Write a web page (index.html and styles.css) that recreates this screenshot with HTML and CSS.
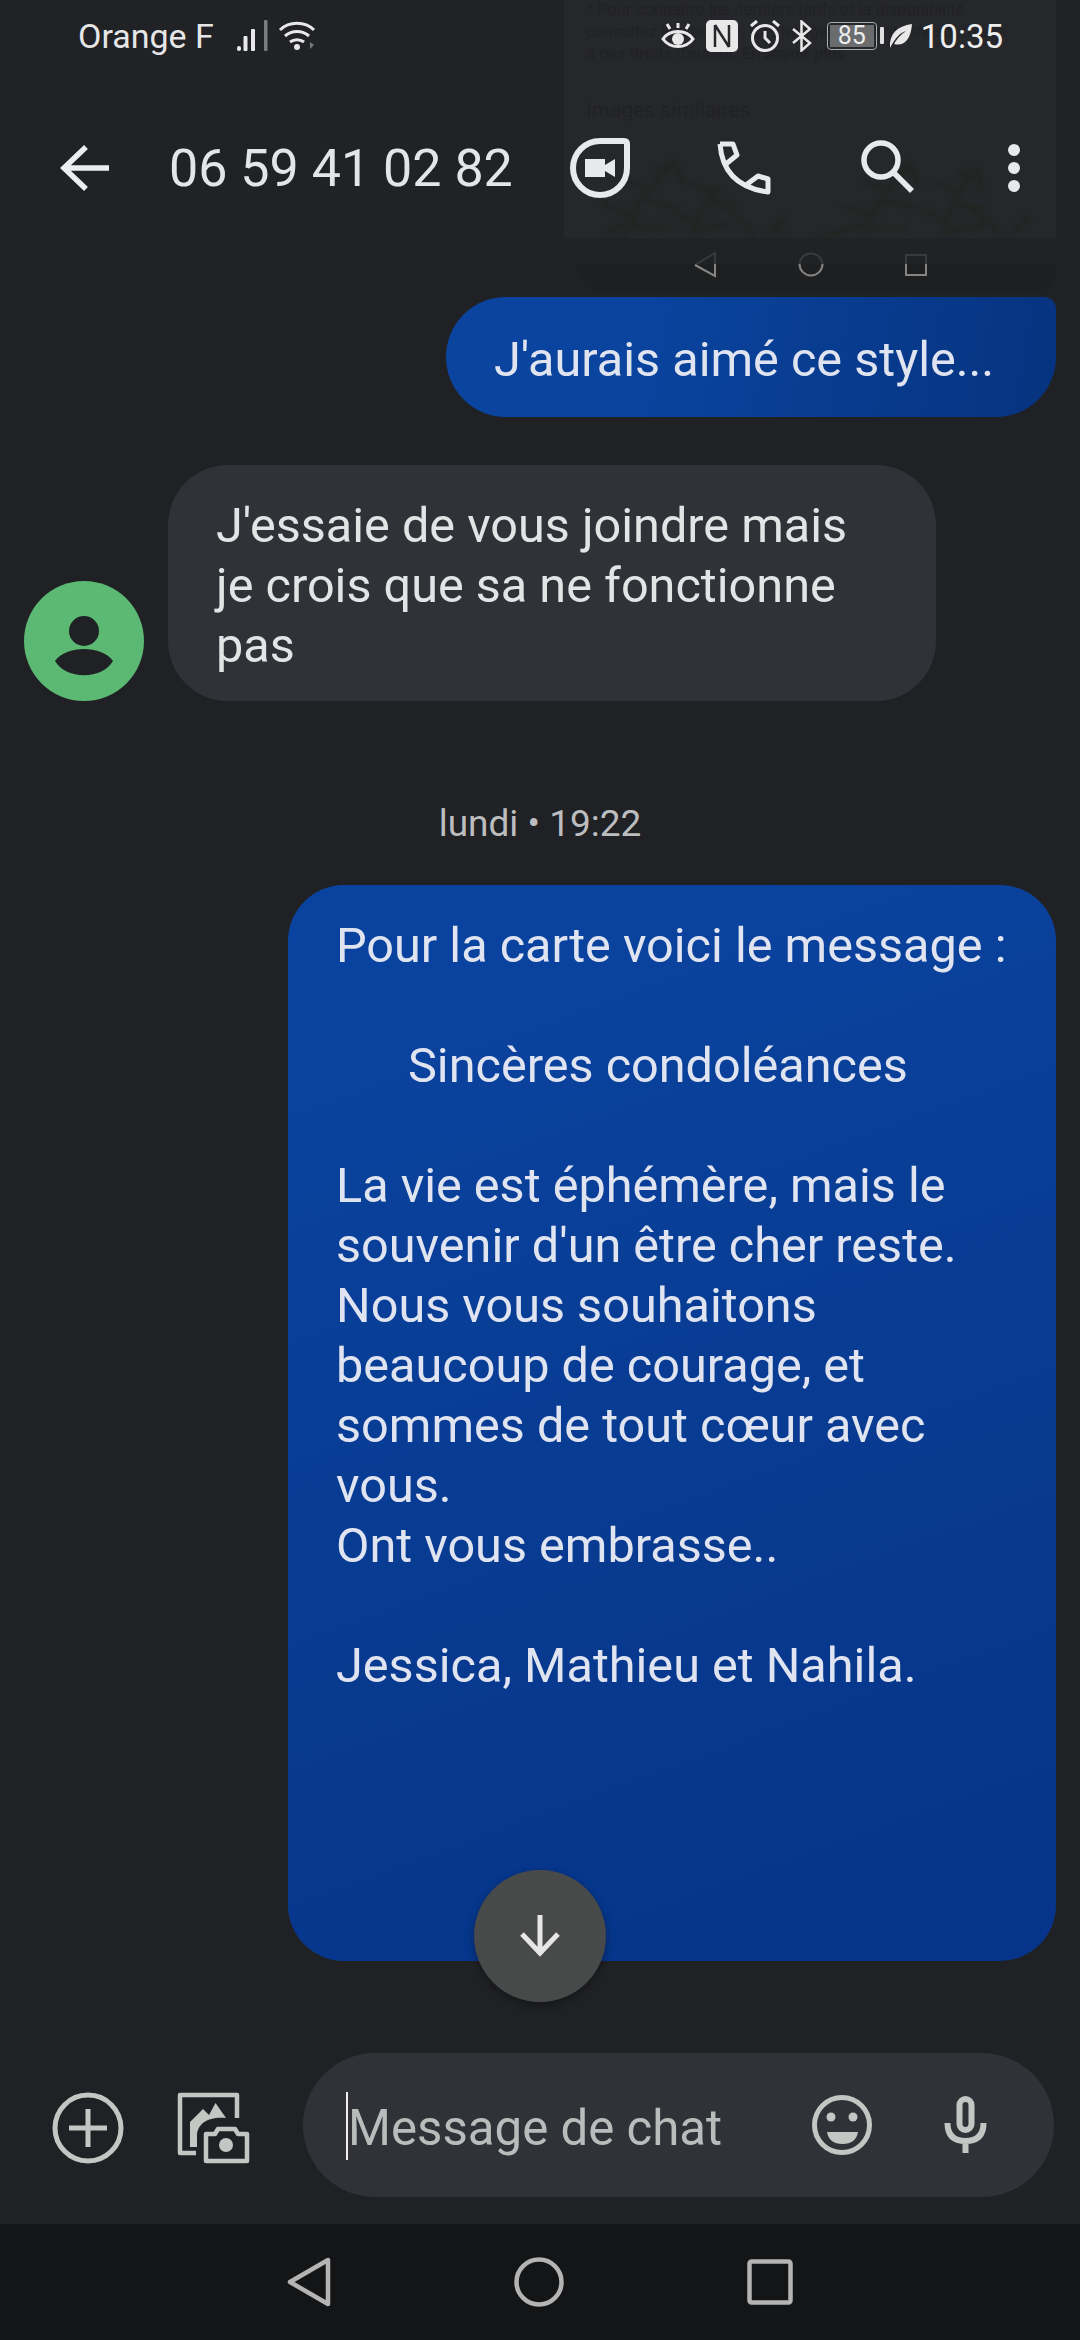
FILE: index.html
```html
<!DOCTYPE html>
<html lang="fr">
<head>
<meta charset="utf-8">
<title>06 59 41 02 82</title>
<link rel="stylesheet" href="styles.css">
</head>
<body>
<div class="screen">
  <header class="header">
    <div class="ghost-panel">
      <p class="ghost-copy">* Pour connaître les derniers tarifs et la disponibilité,
consultez le site Web. Ces images peuvent être soumises
à des droits d'auteur. <b>En savoir plus</b></p>
      <p class="ghost-title">Images similaires</p>
      <svg class="ghost-plant" width="476" height="84" viewBox="0 0 476 84" fill="none" stroke="#232523" stroke-width="6" stroke-linecap="round">
        <path d="M60 84 C70 50 88 30 110 8M110 8l-18 8M110 8l8 20M88 36l-26-10M84 46l28 8M70 64l-30-14M68 72l36 2M130 84c0-20 10-36 26-50M150 40l-24-12M146 48l26 2M130 70l-22-16M130 76l36-6M40 84c8-10 18-16 30-18M190 84c-6-14-16-24-30-30M200 84l24-22M220 84l-10-14"/>
        <path d="M300 84c8-30 26-54 48-74M348 10l-20 8M348 10l6 22M326 36l-26-8M322 46l30 8M310 64l-30-12M306 74l36 0M380 84c2-26 14-50 34-68M414 16l-20 4M414 16l4 22M398 42l-24-12M392 52l30 2M384 70l-24-14M382 78l40-8M270 84c8-8 16-12 28-14M436 84c-6-12-14-20-26-26M444 84l20-22M250 84l30-8"/>
      </svg>
    </div>
    <svg class="ghost-nav" width="240" height="30" viewBox="0 0 240 30" fill="none" stroke-width="2">
      <g stroke="#38393b"><path d="M5 15 25 3V14M121 3.500a11.500 11.500 0 0 0-11.500 10.500M121 3.500a11.500 11.500 0 0 1 11.500 10.500M216 14V5h20v9"/></g>
      <g stroke="#858585"><path d="M5 15 25 26V14M109.500 14a11.500 11.500 0 0 0 23 0M216 14V25h20V14"/></g>
    </svg>
    <div class="ghost-sheet"></div>

    <div class="status">
      <div class="status-left">
        <span class="carrier">Orange F</span>
        <svg width="33" height="32" viewBox="0 0 33 32"><g fill="#e8e8e8"><rect x="2" y="26" width="4" height="5" rx="2"/><rect x="8.500" y="16" width="4" height="15" rx="1"/><rect x="16" y="9" width="4" height="22" rx="1"/></g><rect x="29" y="0" width="3.500" height="31" rx="1" fill="#7b7c7e"/></svg>
        <svg width="38" height="32" viewBox="0 0 38 32" fill="none" stroke="#e8e8e8" stroke-width="3"><path d="M2 10C11 1 27 1 36 10M7 16c7-6 17-6 24 0M12 22c4-3 10-3 14 0"/><circle cx="19" cy="27" r="3" fill="#e8e8e8" stroke="none"/><path d="M32 22v7l4-4z" fill="#77787a" stroke="none"/></svg>
      </div>
      <div class="status-right">
        <svg width="34" height="30" viewBox="0 0 34 30" fill="none" stroke="#e8e8e8" stroke-width="3"><path d="M2 18C9 8 25 8 32 18 25 28 9 28 2 18Z"/><circle cx="17" cy="18" r="6" fill="#e8e8e8" stroke="none"/><path d="M17 2v5M6 3l3 5M28 3l-3 5"/></svg>
        <svg width="32" height="32" viewBox="0 0 32 32"><rect width="32" height="32" rx="5" fill="#e8e8e8"/><path d="M9 5v22M9 5 23 27M23 5v22" fill="none" stroke="#26272b" stroke-width="2.500"/></svg>
        <svg width="32" height="32" viewBox="0 0 32 32" fill="none" stroke="#e8e8e8" stroke-width="3"><circle cx="16" cy="18" r="12.500"/><path d="M16 11v7l5 5M2 6l6-5M30 6l-6-5"/></svg>
        <svg width="20" height="32" viewBox="0 0 20 32" fill="none" stroke="#e8e8e8" stroke-width="2.500"><path d="M1 9 18 23 9.500 30.500V1.500L18 9 1 23"/></svg>
        <div class="battery"><span class="battery-level">85</span></div>
        <svg class="leaf" width="23" height="25" viewBox="0 0 23 25"><path d="M1 24C0 10 8 2 23 0 22 15 15 23 5 20 9 13 13 10 17 7 11 9 6 14 1 24Z" fill="#e8e8e8"/></svg>
        <span class="clock">10:35</span>
      </div>
    </div>

    <div class="toolbar">
      <svg class="back" width="50" height="48" viewBox="0 0 50 48" fill="none" stroke="#eceef1" stroke-width="5.500"><path d="M4 24H49M26 3 4 24 26 45"/></svg>
      <h1 class="title">06 59 41 02 82</h1>
      <div class="actions">
        <svg width="60" height="60" viewBox="0 0 60 60" fill="none" stroke="#e8e9ed" stroke-width="6"><path d="M30 3H54Q57 3 57 6V30A27 27 0 1 1 30 3Z"/><path d="M15 21H35V27L45 21V39L35 33V39H15Z" fill="#e8e9ed" stroke="none"/></svg>
        <svg width="60" height="60" viewBox="0 0 60 60" fill="none" stroke="#e8e9ed" stroke-width="5" stroke-linejoin="round"><path d="M6 6Q9 48 54 54V41L44 38 32 47M6 6H19L23 17 12 26"/></svg>
        <svg class="search" width="60" height="60" viewBox="0 0 60 60" fill="none" stroke="#e8e9ed" stroke-width="5.500"><circle cx="23" cy="22" r="17"/><path d="M35 34 54 53"/></svg>
        <svg class="more" width="60" height="60" viewBox="0 0 60 60" fill="#e8e9ed"><circle cx="30" cy="12" r="6"/><circle cx="30" cy="30" r="6"/><circle cx="30" cy="48" r="6"/></svg>
      </div>
    </div>
  </header>

  <main class="thread">
    <div class="bubble sent short">J'aurais aimé ce style...</div>
    <div class="incoming">
      <svg class="avatar" width="120" height="120" viewBox="0 0 120 120"><circle cx="60" cy="60" r="60" fill="#5bb974"/><circle cx="60" cy="50" r="15" fill="#202125"/><path d="M31 80C42 64 78 64 89 80 78 99 42 99 31 80Z" fill="#202125"/></svg>
      <div class="bubble received">J'essaie de vous joindre mais
je crois que sa ne fonctionne
pas</div>
    </div>
    <div class="stamp">lundi • 19:22</div>
    <div class="bubble sent long">Pour la carte voici le message :

<span class="indent">Sincères condoléances</span>

La vie est éphémère, mais le
souvenir d'un être cher reste.
Nous vous souhaitons
beaucoup de courage, et
sommes de tout cœur avec
vous.
Ont vous embrasse..

Jessica, Mathieu et Nahila.</div>
    <button class="jump" type="button" aria-label="Aller en bas">
      <svg width="40" height="42" viewBox="0 0 40 42" fill="none" stroke="#e6e6e6" stroke-width="5"><path d="M20 0V38M2 19 20 38 38 19"/></svg>
    </button>
  </main>

  <footer class="composer">
    <svg class="tool" width="72" height="72" viewBox="0 0 72 72" fill="none" stroke="#c4c6c4" stroke-width="5"><circle cx="36" cy="36" r="33"/><path d="M17 36H55M36 17V55"/></svg>
    <svg class="tool" width="73" height="72" viewBox="0 0 73 72" fill="none" stroke="#c4c6c4" stroke-width="4.500" stroke-linejoin="round"><path d="M60 26V3H3V61H19"/><path d="M13 55V30L26 17 32 23 38.500 11 49 26C34 24 20 30 20 44V55Z" fill="#c4c6c4" stroke="none"/><path d="M29 42H38L41 37H58L61 42H70V69H29Z"/><circle cx="49" cy="53" r="7" fill="#c4c6c4" stroke="none"/></svg>
    <div class="field">
      <span class="caret"></span>
      <span class="placeholder">Message de chat</span>
      <svg width="60" height="60" viewBox="0 0 60 60" fill="none" stroke="#c4c6c4" stroke-width="5"><circle cx="30" cy="30" r="27.500"/><circle cx="19" cy="22" r="4.500" fill="#c4c6c4" stroke="none"/><circle cx="41" cy="22" r="4.500" fill="#c4c6c4" stroke="none"/><path d="M15 37H46Q44 49 30.500 49 17 49 15 37Z" fill="#c4c6c4" stroke="none"/></svg>
      <svg class="mic" width="43" height="58" viewBox="0 0 43 58" fill="none" stroke="#c4c6c4" stroke-width="6"><rect x="15.500" y="3" width="12" height="31" rx="6"/><path d="M3.500 27Q3.500 45 21.500 45 39.500 45 39.500 27M21.500 44V57"/></svg>
    </div>
  </footer>

  <nav class="navbar">
    <svg width="44" height="50" viewBox="0 0 44 50" fill="none" stroke="#b4b4b4" stroke-width="4.500" stroke-linejoin="round"><path d="M3 25 41 3V47Z"/></svg>
    <svg width="50" height="50" viewBox="0 0 50 50" fill="none" stroke="#b4b4b4" stroke-width="4.500"><circle cx="25" cy="25" r="22.500"/></svg>
    <svg width="46" height="46" viewBox="0 0 46 46" fill="none" stroke="#b4b4b4" stroke-width="4.500"><rect x="2.500" y="2.500" width="41" height="41" rx="2"/></svg>
  </nav>
</div>
</body>
</html>
```

FILE: styles.css
```css
* { box-sizing: border-box; }
html, body { margin: 0; padding: 0; }
body { width: 1080px; height: 2340px; overflow: hidden; background: #202125; font-family: Roboto, "Noto Sans", sans-serif; }
p, h1 { margin: 0; }
svg { display: block; flex: none; }

.screen { width: 1080px; height: 2340px; display: flex; flex-direction: column; }

.header { position: relative; height: 264px; flex: none; background: #212226; color: #e8e9ed; z-index: 1; }
.ghost-panel { position: absolute; left: 564px; top: 0; width: 492px; height: 238px; background: #26272b; overflow: hidden; padding: 0 22px; }
.ghost-copy { white-space: pre; font-size: 16.500px; line-height: 22px; color: #212226; margin-top: -1px; }
.ghost-title { font-size: 21px; line-height: 28px; color: #212226; margin-top: 31px; }
.ghost-plant { position: absolute; left: 0; bottom: 0; filter: blur(2px); }
.ghost-nav { position: absolute; left: 690px; top: 250px; z-index: 2; }
.ghost-sheet { position: absolute; left: 575px; top: 264px; width: 481px; height: 26px; background: #1e1f20; border-radius: 0 0 26px 40px; }

.status { position: relative; height: 72px; display: flex; justify-content: space-between; align-items: center; padding: 0 77px 0 78px; }
.status-left { display: flex; align-items: center; }
.carrier { font-size: 34px; color: #e6e6e6; margin-right: 21px; }
.status-left svg + svg { margin-left: 10px; }
.status-right { display: flex; align-items: center; gap: 11px; }
.battery { position: relative; width: 50px; height: 28px; border: 1.500px solid #a9aaac; border-radius: 4px; padding: 2px; margin-left: 4px; }
.battery::after { content: ""; position: absolute; left: 52px; top: 4px; width: 4px; height: 17px; border-radius: 1px; background: #e0e0e0; }
.battery-level { display: block; height: 100%; background: #6b6c6e; color: #ececec; font-size: 25px; line-height: 22px; text-align: center; }
.leaf { margin-left: 1px; }
.clock { font-size: 33px; color: #eeeeee; margin-left: -2px; }

.toolbar { position: relative; height: 192px; display: flex; align-items: center; padding: 0 36px 0 60px; }
.back { margin-right: 59px; }
.title { flex: 1; font-size: 52px; font-weight: 400; color: #e4e5e7; }
.actions { display: flex; align-items: center; gap: 84px; }
.more { margin-left: -18px; }

.thread { position: relative; flex: 1; min-height: 0; padding: 33px 24px 0; display: flex; flex-direction: column; }
.bubble { font-size: 48.600px; line-height: 60px; white-space: pre; padding: 31px 48px 25px; }
.sent { align-self: flex-end; color: #e0e4f0; }
.received { background: #313238; color: #e3e4e6; border-radius: 60px; width: 768px; }
.short { width: 610px; height: 120px; padding-top: 33px; background: linear-gradient(100deg, #0a449f 30%, #06337f 100%); border-radius: 60px 12px 60px 60px; }
.incoming { display: flex; align-items: flex-end; gap: 24px; margin-top: 48px; }
.stamp { text-align: center; font-size: 37px; line-height: 48px; color: #bcbdbf; margin-top: 99px; margin-bottom: 37px; }
.long { width: 768px; height: 1076px; background: linear-gradient(160deg, #0a439f 10%, #083a90 60%, #05348a 100%); border-radius: 56px; }
.indent { display: inline-block; padding-left: 72px; }
.jump { position: absolute; left: 474px; top: 1606px; width: 132px; height: 132px; border: 0; border-radius: 50%; background: #484a49; box-shadow: 0 3px 10px rgba(0, 0, 0, 0.35); display: flex; align-items: center; justify-content: center; padding: 0; }

.composer { flex: none; display: flex; align-items: center; gap: 53px; padding: 0 26px 27px 52px; }
.tool { margin-top: 6px; }
.field { flex: 1; height: 144px; border-radius: 72px; background: #313238; display: flex; align-items: center; padding: 0 67px 0 43px; }
.caret { width: 2px; height: 68px; background: #f0f0f0; margin-top: 2px; }
.placeholder { flex: 1; font-size: 49.200px; color: #babcbb; margin-top: 6px; }
.mic { margin-left: 72px; }

.navbar { flex: none; height: 116px; background: #141517; display: flex; align-items: center; gap: 183px; padding-left: 287px; }
```
